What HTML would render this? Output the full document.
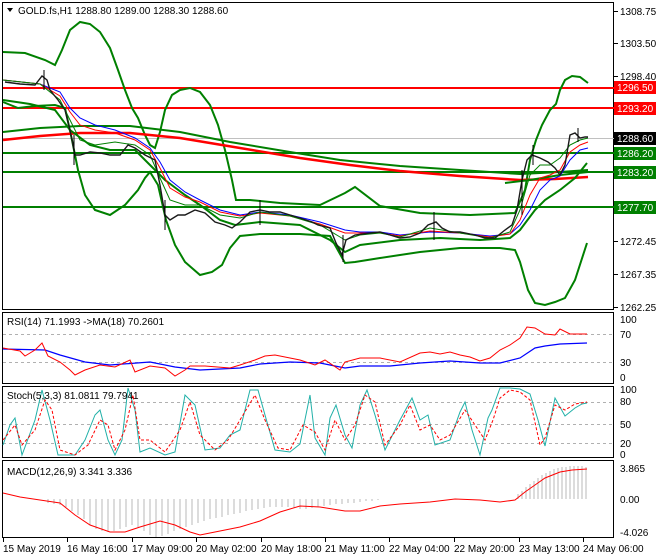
<!DOCTYPE html>
<html><head><meta charset="utf-8"><style>
body{margin:0;background:#fff;width:660px;height:560px;overflow:hidden;font-family:"Liberation Sans",sans-serif}
svg{display:block}
text{font-family:"Liberation Sans",sans-serif;font-size:10px;fill:#000}
</style></head><body>
<svg width="660" height="560" viewBox="0 0 660 560">
<g fill="none" stroke="#000" stroke-width="1">
<rect x="2.5" y="2.5" width="611" height="307"/>
<rect x="2.5" y="312.5" width="611" height="71"/>
<rect x="2.5" y="386.5" width="611" height="71"/>
<rect x="2.5" y="460.5" width="611" height="77"/>
</g>
<g stroke="#000" stroke-width="1">
<line x1="614" y1="11.5" x2="618" y2="11.5"/><line x1="614" y1="43.5" x2="618" y2="43.5"/><line x1="614" y1="76.5" x2="618" y2="76.5"/><line x1="614" y1="241.5" x2="618" y2="241.5"/><line x1="614" y1="274.5" x2="618" y2="274.5"/><line x1="614" y1="307.5" x2="618" y2="307.5"/>
</g>
<g font-size="10">
<text x="620" y="15">1308.75</text>
<text x="620" y="47">1303.50</text>
<text x="620" y="80">1298.40</text>
<text x="620" y="245">1272.45</text>
<text x="620" y="278">1267.35</text>
<text x="620" y="311">1262.25</text>
</g>
<path d="M7 8 L13 8 L10 12 Z" fill="#000"/>
<text x="18" y="14">GOLD.fs,H1  1288.80 1289.00 1288.30 1288.60</text>
<line x1="3" y1="138.5" x2="614" y2="138.5" stroke="#c0c0c0"/>
<g stroke-width="2">
<line x1="3" y1="88" x2="614" y2="88" stroke="#f00"/>
<line x1="3" y1="108" x2="614" y2="108" stroke="#f00"/>
<line x1="3" y1="153" x2="614" y2="153" stroke="#007f00"/>
<line x1="3" y1="172" x2="614" y2="172" stroke="#007f00"/>
<line x1="3" y1="207" x2="614" y2="207" stroke="#007f00"/>
</g>
<g fill="none" stroke="#008000" stroke-width="2">
<polyline points="3,52 25,53 45,60 55,65 62,50 70,30 80,22 90,24 100,32 110,48 118,70 125,90 132,108 138,118 145,135 150,145 155,148 160,132 165,110 172,95 180,90 190,88 200,92 210,105 218,125 225,150 232,180 236,200 250,200 280,203 320,205 345,193 355,187 380,206 420,213 470,215 515,213 525,190 530,160 536,140 542,125 550,110 556,104 560,90 565,80 572,76 580,77 588,83"/>
<polyline points="3,102 18,108 35,106 55,105 65,108 72,140 78,170 85,195 95,210 110,215 125,205 138,190 145,178 150,172 158,185 166,220 175,245 185,262 200,275 212,272 222,265 230,248 240,236 260,234 300,234 330,236 345,263 355,262 380,258 420,252 460,248 500,248 515,250 520,262 528,290 535,303 545,305 555,302 565,298 575,280 587,243"/>
<polyline points="3,132 40,128 80,126 130,126 180,132 230,142 290,152 340,160 400,166 460,170 520,174 560,172 588,170" stroke-width="2" stroke="#008000"/>
<polyline points="3,140 40,136 80,133 130,133 180,138 240,148 300,158 350,165 400,171 460,176 520,180 555,179 588,177" stroke-width="2.5" stroke="#f00"/>
<polyline points="3,100 30,104 55,110 70,130 90,145 110,150 135,150 150,165 165,180 185,195 200,205 220,220 235,225 260,222 300,225 330,240 345,252 360,245 400,240 440,238 480,240 510,238 520,230 535,210 545,200 560,190 575,178 587,163"/>
<polyline points="505,183 530,180 560,175 588,172" stroke-width="2"/>
</g>
<g fill="none" stroke-width="1">
<polyline stroke="#00f" points="3,80 40,84 60,92 70,108 80,118 95,125 115,130 135,138 150,148 160,162 170,180 185,192 200,200 220,210 240,215 260,212 290,215 320,222 345,230 360,232 380,232 400,235 430,232 460,233 490,236 510,234 520,225 530,210 540,190 550,180 560,176 570,160 580,150 588,148"/>
<polyline stroke="#f00" points="3,80 40,84 60,96 70,112 80,125 95,130 115,133 135,140 150,150 160,168 170,188 185,197 200,202 220,212 240,216 260,213 290,216 320,224 345,233 360,233 380,233 400,236 430,231 460,233 490,237 510,234 520,220 530,195 540,178 550,175 560,170 570,152 580,145 588,142"/>
<polyline stroke="#008000" points="3,80 40,84 60,100 70,120 80,140 95,145 115,142 135,145 150,155 160,178 170,200 185,205 200,205 220,215 240,218 260,212 290,216 320,225 345,240 360,235 380,233 400,237 430,228 460,233 490,238 510,232 520,210 530,175 540,165 550,165 560,158 570,145 580,140 588,138"/>
</g>
<polyline fill="none" stroke="#1a1a1a" stroke-width="1.4" points="5,82 20,84 35,85 42,76 47,80 50,90 58,100 65,110 70,130 75,155 80,155 90,152 100,153 110,155 120,155 128,145 135,148 145,155 155,160 160,185 165,215 170,220 178,215 185,215 195,210 205,213 215,222 225,225 232,228 240,222 250,212 260,210 270,212 280,212 290,215 300,218 312,222 318,225 330,228 336,243 342,255 346,240 355,235 370,233 380,232 390,235 400,238 410,237 420,233 428,225 436,222 442,228 450,232 460,232 475,235 485,238 495,238 505,230 512,225 517,210 522,180 527,160 532,155 540,158 548,162 555,168 560,175 565,165 570,135 575,133 580,138 585,137 588,137"/>
<g stroke="#000" stroke-width="1">
<line x1="44" y1="70" x2="44" y2="90"/><line x1="74" y1="135" x2="74" y2="165"/><line x1="165" y1="200" x2="165" y2="230"/><line x1="260" y1="200" x2="260" y2="225"/><line x1="343" y1="235" x2="343" y2="262"/><line x1="434" y1="212" x2="434" y2="240"/><line x1="522" y1="170" x2="522" y2="215"/><line x1="533" y1="145" x2="533" y2="165"/><line x1="578" y1="128" x2="578" y2="142"/>
</g>
<g font-size="10">
<rect x="614" y="81" width="42" height="13" fill="#f00"/><text x="617" y="91" style="fill:#fff">1296.50</text>
<rect x="614" y="102" width="42" height="13" fill="#f00"/><text x="617" y="112" style="fill:#fff">1293.20</text>
<rect x="614" y="132" width="42" height="13" fill="#000"/><text x="617" y="142" style="fill:#fff">1288.60</text>
<rect x="614" y="147" width="42" height="13" fill="#008000"/><text x="617" y="157" style="fill:#fff">1286.20</text>
<rect x="614" y="166" width="42" height="13" fill="#008000"/><text x="617" y="176" style="fill:#fff">1283.20</text>
<rect x="614" y="201" width="42" height="13" fill="#008000"/><text x="617" y="211" style="fill:#fff">1277.70</text>
</g>
<g stroke="#b0b0b0" stroke-dasharray="3,3"><line x1="3" y1="334.5" x2="613" y2="334.5"/><line x1="3" y1="362.5" x2="613" y2="362.5"/></g>
<polyline fill="none" stroke="#00f" stroke-width="1.2" points="3,349 45,350 60,355 85,362 110,365 150,362 175,367 200,370 240,368 260,364 290,362 320,363 345,368 360,366 390,366 420,363 450,361 480,363 500,363 520,358 535,348 545,346 560,344 587,343"/>
<polyline fill="none" stroke="#f00" points="3,348 20,351 25,356 35,350 42,343 48,356 60,362 70,370 75,375 85,370 100,365 115,367 130,360 135,372 150,366 165,368 175,376 185,370 190,366 205,366 230,368 240,365 255,360 265,356 275,355 300,360 315,365 325,360 340,370 345,362 360,358 380,358 400,362 420,353 430,352 440,354 450,352 460,355 470,357 480,361 490,358 500,350 510,345 520,338 527,327 535,328 545,334 555,335 560,329 570,334 580,334 587,334"/>
<text x="7" y="325">RSI(14) 71.1993  -&gt;MA(18) 70.2601</text>
<text x="620" y="323">100</text><text x="620" y="338">70</text><text x="620" y="366">30</text><text x="620" y="381">0</text>
<g stroke="#b0b0b0" stroke-dasharray="3,3"><line x1="3" y1="402.5" x2="613" y2="402.5"/><line x1="3" y1="424.5" x2="613" y2="424.5"/><line x1="3" y1="443.5" x2="613" y2="443.5"/></g>
<polyline fill="none" stroke="#20b0a8" points="3,445 10,425 15,418 22,455 35,420 42,390 50,420 58,455 75,455 85,440 95,415 100,410 108,440 115,455 122,440 128,388 135,410 140,452 150,448 165,455 175,452 185,395 195,405 205,450 220,448 230,435 240,430 250,390 258,390 265,415 275,450 290,452 300,444 310,395 315,438 325,455 330,418 336,405 345,435 352,448 360,405 367,390 375,415 385,450 400,420 412,398 420,420 428,415 435,445 450,440 460,412 465,402 472,430 480,455 488,418 492,410 500,388 510,388 520,389 530,394 538,420 545,446 555,398 565,416 575,408 582,404 587,403"/>
<polyline fill="none" stroke="#f00" stroke-dasharray="3,2" points="3,440 15,425 22,445 35,430 45,400 52,410 60,450 75,455 88,445 100,420 108,425 115,450 125,430 133,395 140,440 150,440 165,452 180,430 190,402 200,435 215,450 228,440 240,420 255,395 265,420 278,448 290,450 303,425 315,432 325,450 335,420 345,440 355,425 365,395 375,402 385,445 400,425 410,405 420,430 430,425 440,440 450,435 465,410 475,425 485,440 493,420 500,398 510,390 520,392 530,400 540,445 545,438 555,405 565,410 575,404 587,402"/>
<text x="7" y="399">Stoch(5,3,3) 81.0811 79.7941</text>
<text x="620" y="393">100</text><text x="620" y="405">80</text><text x="620" y="428">50</text><text x="620" y="447">20</text><text x="620" y="458">0</text>
<g stroke="#b8b8b8" stroke-width="1">
<path d="M48 499v4M54 499v5M60 499v6M66 499v8M72 499v12M78 499v16M84 499v20M90 499v26M96 499v30M102 499v32M108 499v33M114 499v32M120 499v30M126 499v28M132 499v26M138 499v28M144 499v32M150 499v36M156 499v38M162 499v37M168 499v35M174 499v32M180 499v30M186 499v28M192 499v26M198 499v24M204 499v22M210 499v20M216 499v19M222 499v18M228 499v16M234 499v15M240 499v14M246 499v12M252 499v11M258 499v10M264 499v9M270 499v8M276 499v8M282 499v8M288 499v8M294 499v9M300 499v10M306 499v10M312 499v9M318 499v8M324 499v7M330 499v6M336 499v5M342 499v5M348 499v4M354 499v4M360 499v3M366 499v2M372 499v2M378 499v1"/>
<path d="M518 499v-5M522 499v-8M526 499v-12M530 499v-15M534 499v-18M538 499v-21M542 499v-24M546 499v-26M550 499v-28M554 499v-30M558 499v-31M562 499v-32M566 499v-32M570 499v-33M574 499v-33M578 499v-33M582 499v-33M586 499v-32"/>
</g>
<polyline fill="none" stroke="#f00" points="3,493 20,497 40,500 60,503 75,515 90,525 110,532 125,532 140,527 160,521 175,525 190,532 200,535 215,532 240,527 260,521 280,512 300,506 320,507 345,511 360,511 380,506 400,504 430,502 455,499 480,500 500,502 515,500 525,492 535,485 545,478 560,472 572,470 587,469"/>
<text x="7" y="475">MACD(12,26,9) 3.341 3.336</text>
<text x="620" y="472">3.865</text><text x="620" y="503">0.00</text><text x="620" y="536">-4.026</text>
<g stroke="#000"><line x1="3.5" y1="538" x2="3.5" y2="542"/><line x1="67.5" y1="538" x2="67.5" y2="542"/><line x1="132.5" y1="538" x2="132.5" y2="542"/><line x1="196.5" y1="538" x2="196.5" y2="542"/><line x1="261.5" y1="538" x2="261.5" y2="542"/><line x1="325.5" y1="538" x2="325.5" y2="542"/><line x1="389.5" y1="538" x2="389.5" y2="542"/><line x1="454.5" y1="538" x2="454.5" y2="542"/><line x1="519.5" y1="538" x2="519.5" y2="542"/><line x1="583.5" y1="538" x2="583.5" y2="542"/></g>
<g font-size="10">
<text x="3" y="552">15 May 2019</text><text x="67" y="552">16 May 16:00</text><text x="132" y="552">17 May 09:00</text><text x="196" y="552">20 May 02:00</text><text x="261" y="552">20 May 18:00</text><text x="325" y="552">21 May 11:00</text><text x="389" y="552">22 May 04:00</text><text x="454" y="552">22 May 20:00</text><text x="519" y="552">23 May 13:00</text><text x="583" y="552">24 May 06:00</text>
</g>
</svg>
</body></html>
